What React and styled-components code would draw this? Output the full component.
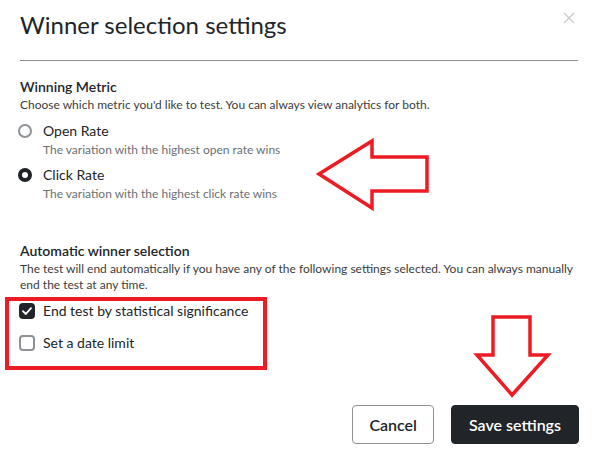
import React, { useState } from "react";
import styled, { createGlobalStyle, css } from "styled-components";

const GlobalStyle = createGlobalStyle`
  html, body {
    margin: 0;
    padding: 0;
    background: #ffffff;
  }
  body {
    font-family: Lato, "Open Sans", Arial, sans-serif;
    color: #212529;
  }
`;

const Modal = styled.div`
  position: relative;
  width: 594px;
  height: 463px;
  background: #fff;
  overflow: hidden;
`;

const Header = styled.div`
  display: flex;
  justify-content: space-between;
  align-items: flex-start;
  margin: 0 16px 0 20px;
  padding: 8px 0 18px;
  border-bottom: 1px solid #8a8f96;
`;

const Title = styled.h2`
  margin: 0;
  font-size: 24px;
  font-weight: 400;
  line-height: 34px;
  color: #212529;
`;

const Close = styled.button`
  border: 0;
  background: none;
  padding: 0;
  margin: 4px 3px 0 0;
  width: 12px;
  height: 12px;
  display: flex;
  cursor: pointer;
`;

const Body = styled.div`
  padding: 0 15px 0 20px;
`;

const Section = styled.section`
  margin-top: ${(p) => p.$top}px;
`;

const Heading = styled.h3`
  margin: 0 0 1px;
  font-size: 14px;
  font-weight: 600;
  line-height: 19px;
  color: #212529;
`;

const Desc = styled.p`
  margin: 0;
  font-size: 12px;
  line-height: 16px;
  color: #3d3d3d;
`;

const Option = styled.label`
  display: flex;
  flex-direction: column;
  margin-top: ${(p) => p.$top}px;
  cursor: pointer;
`;

const OptionRow = styled.span`
  display: flex;
  align-items: center;
  gap: ${(p) => p.$gap}px;
  font-size: 14px;
  line-height: 20px;
  color: #212529;
`;

const Hint = styled.span`
  margin-top: 1px;
  padding-left: 23px;
  font-size: 12px;
  line-height: 16px;
  color: #6c6f73;
`;

const Radio = styled.span`
  box-sizing: border-box;
  width: 14px;
  height: 14px;
  margin-left: -2px;
  border-radius: 50%;
  flex: none;
  background: #fff;
  border: 2px solid #8e9196;
  ${(p) =>
    p.$on &&
    css`
      border: 4px solid #1f2226;
    `}
`;

const Box = styled.span`
  box-sizing: border-box;
  width: 16px;
  height: 16px;
  margin-left: -1px;
  border-radius: 4px;
  flex: none;
  display: flex;
  align-items: center;
  justify-content: center;
  border: 2px solid #8e9196;
  background: #fff;
  ${(p) =>
    p.$on &&
    css`
      border-color: #212529;
      background: #212529;
    `}
`;

const Footer = styled.div`
  display: flex;
  justify-content: flex-end;
  gap: 17px;
  margin-top: 52px;
`;

const Button = styled.button`
  box-sizing: border-box;
  height: 39px;
  padding: 0 ${(p) => (p.$primary ? 17 : 16)}px;
  border-radius: 4px;
  font-family: inherit;
  font-size: 16px;
  font-weight: 600;
  cursor: pointer;
  border: 1px solid ${(p) => (p.$primary ? "#212529" : "#8e9196")};
  background: ${(p) => (p.$primary ? "#212529" : "#fff")};
  color: ${(p) => (p.$primary ? "#fff" : "#212529")};
`;

const Marks = styled.svg`
  position: absolute;
  inset: 0;
  pointer-events: none;
`;

const metrics = [
  { id: "open", label: "Open Rate", hint: "The variation with the highest open rate wins" },
  { id: "click", label: "Click Rate", hint: "The variation with the highest click rate wins" },
];

const Check = () => (
  <svg width="10" height="8" viewBox="0 0 10 8">
    <path d="M1 4.2 L3.8 7 L9 1.2" fill="none" stroke="#fff" strokeWidth="1.8" strokeLinecap="round" strokeLinejoin="round" />
  </svg>
);

export default function App() {
  const [metric, setMetric] = useState("click");
  const [significance, setSignificance] = useState(true);
  const [dateLimit, setDateLimit] = useState(false);

  return (
    <Modal>
      <GlobalStyle />
      <Header>
        <Title>Winner selection settings</Title>
        <Close aria-label="Close">
          <svg width="12" height="12" viewBox="0 0 12 12">
            <path d="M1 1 L11 11 M11 1 L1 11" stroke="#c9cbce" strokeWidth="1.4" />
          </svg>
        </Close>
      </Header>

      <Body>
        <Section $top={16}>
          <Heading>Winning Metric</Heading>
          <Desc>Choose which metric you'd like to test. You can always view analytics for both.</Desc>
          {metrics.map((m, i) => (
            <Option key={m.id} $top={i === 0 ? 8 : 7} onClick={() => setMetric(m.id)}>
              <OptionRow $gap={11}>
                <Radio $on={metric === m.id} />
                {m.label}
              </OptionRow>
              <Hint>{m.hint}</Hint>
            </Option>
          ))}
        </Section>

        <Section $top={39}>
          <Heading>Automatic winner selection</Heading>
          <Desc>
            The test will end automatically if you have any of the following settings selected. You can always manually
            end the test at any time.
          </Desc>
          <Option $top={8} onClick={() => setSignificance(!significance)}>
            <OptionRow $gap={8}>
              <Box $on={significance}>{significance && <Check />}</Box>
              End test by statistical significance
            </OptionRow>
          </Option>
          <Option $top={12} onClick={() => setDateLimit(!dateLimit)}>
            <OptionRow $gap={8}>
              <Box $on={dateLimit}>{dateLimit && <Check />}</Box>
              Set a date limit
            </OptionRow>
          </Option>
        </Section>

        <Footer>
          <Button>Cancel</Button>
          <Button $primary>Save settings</Button>
        </Footer>
      </Body>

      <Marks width="594" height="463" viewBox="0 0 594 463">
        <g fill="none" stroke="#ed1c24" strokeWidth="3.5" strokeLinejoin="miter">
          <polygon points="319,174 372,141 372,157 427,157 427,191 372,191 372,208" />
          <rect x="7" y="299" width="258" height="69" strokeWidth="4" />
          <polygon points="493,317 530,317 530,355 548,355 512,395 477,355 493,355" />
        </g>
      </Marks>
    </Modal>
  );
}
